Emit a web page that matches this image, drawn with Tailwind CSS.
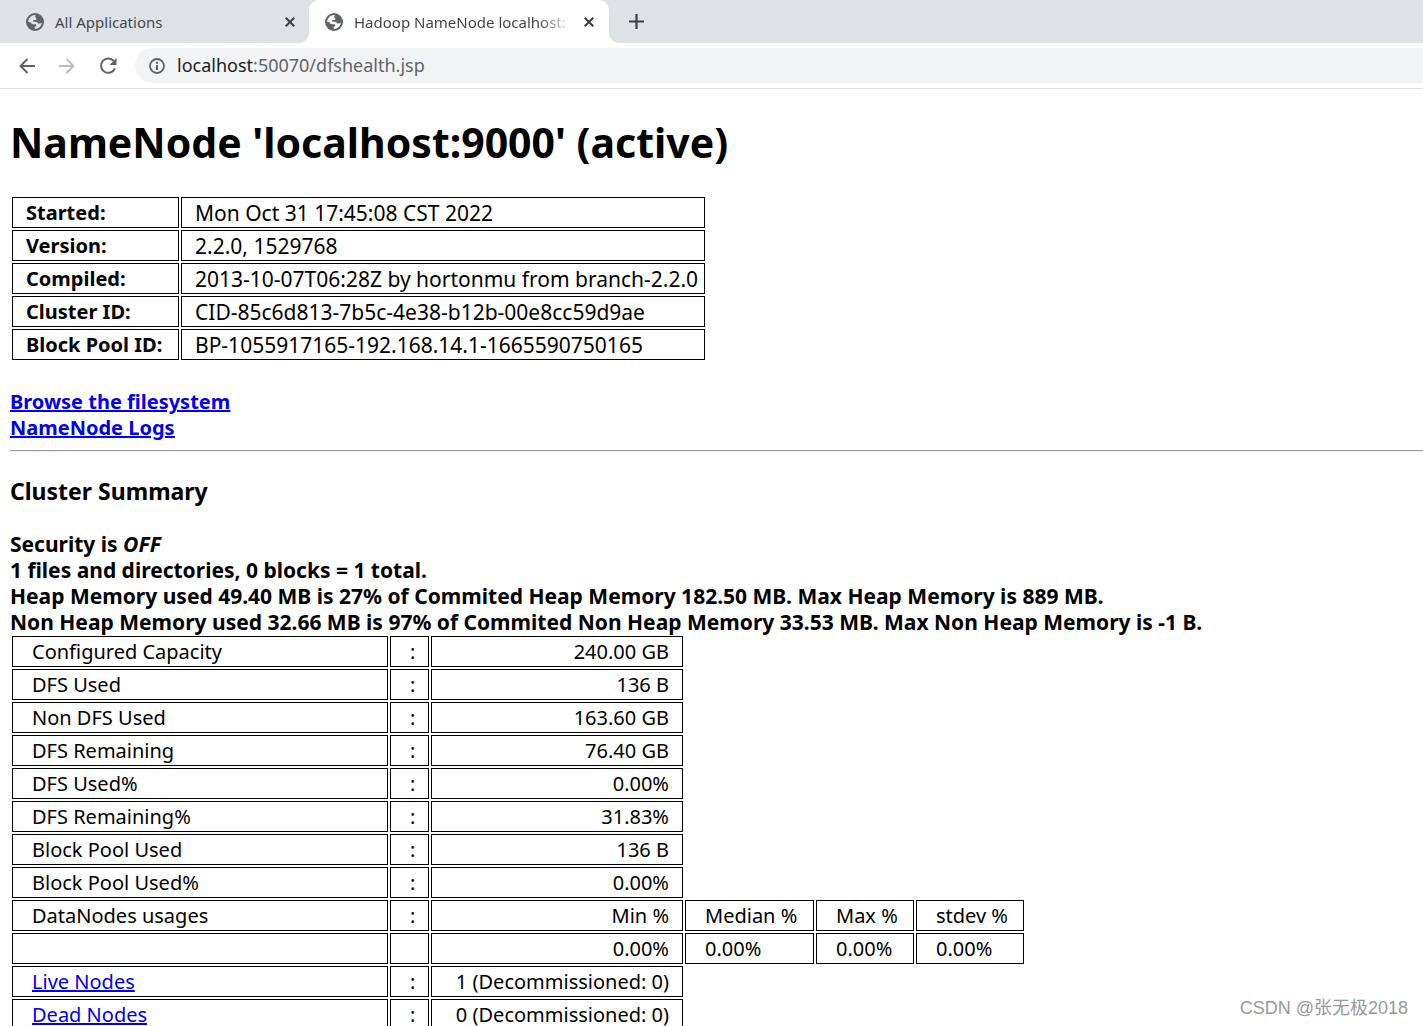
<!DOCTYPE html>
<html lang="en">
<head>
<meta charset="utf-8">
<title>Hadoop NameNode localhost:9000</title>
<script src="https://cdn.jsdelivr.net/npm/@tailwindcss/browser@4"></script>
</head>
<body class="relative flex h-screen flex-col overflow-hidden bg-white font-['Noto_Sans','Noto_Sans_CJK_SC',sans-serif] text-black">
<svg class="hidden">
  <symbol id="globe" viewBox="0 0 18 18">
    <circle cx="9" cy="9" r="9" fill="#5f6368"/>
    <path d="M10 2.2C9 3 8.900 4 9.800 4.700C10.800 5.500 10.600 6.700 9.300 7H7.300V8.800H10.200C11.500 8.800 11.700 10 12.300 10.500H14.200L15.900 9.400A7 7 0 0 1 9 16L8.500 14.200L10.500 12.600L9.700 11.300H6.700C5.500 11.300 5.300 9.700 4.300 9.300L2 9A7 7 0 0 1 10 2.200Z" fill="#dee1e6"/>
  </symbol>
  <symbol id="globe-active" viewBox="0 0 18 18">
    <circle cx="9" cy="9" r="9" fill="#5f6368"/>
    <path d="M10 2.2C9 3 8.900 4 9.800 4.700C10.800 5.500 10.600 6.700 9.300 7H7.300V8.800H10.200C11.500 8.800 11.700 10 12.300 10.500H14.200L15.900 9.400A7 7 0 0 1 9 16L8.500 14.200L10.500 12.600L9.700 11.300H6.700C5.500 11.300 5.300 9.700 4.300 9.300L2 9A7 7 0 0 1 10 2.200Z" fill="#fff"/>
  </symbol>
  <symbol id="close" viewBox="0 0 10 10"><path d="M.7.7l8.600 8.600M9.300.7L.7 9.300" stroke="#3c4043" stroke-width="2" fill="none"/></symbol>
</svg>

<header class="shrink-0">
  <div class="flex h-[43px] bg-[#dee1e6] text-[15px] text-[#45494d]">
    <div class="flex w-[309px] items-center pl-[26px] pr-3">
      <svg class="size-[18px] shrink-0"><use href="#globe"/></svg>
      <span class="ml-[11px] flex-1 whitespace-nowrap pt-0.5">All Applications</span>
      <button type="button" aria-label="Close tab" class="flex size-[14px] items-center justify-center"><svg class="size-[10px]"><use href="#close"/></svg></button>
    </div>
    <div class="relative flex w-[300px] items-center rounded-t-[10px] bg-white pl-4 pr-[13px]">
      <svg class="absolute bottom-0 right-full size-[10px]" viewBox="0 0 10 10"><path d="M10 0A10 10 0 0 1 0 10H10Z" fill="#fff"/></svg>
      <svg class="absolute bottom-0 left-full size-[10px]" viewBox="0 0 10 10"><path d="M0 0A10 10 0 0 0 10 10H0Z" fill="#fff"/></svg>
      <svg class="size-[18px] shrink-0"><use href="#globe-active"/></svg>
      <span class="ml-[11px] w-[218px] whitespace-nowrap bg-linear-to-r from-[#3c4043] from-85% to-transparent bg-clip-text pt-0.5 text-transparent">Hadoop NameNode localhost:</span>
      <button type="button" aria-label="Close tab" class="ml-auto flex size-[14px] shrink-0 items-center justify-center"><svg class="size-[10px]"><use href="#close"/></svg></button>
    </div>
    <button type="button" aria-label="New tab" class="ml-5 flex w-[15px] items-center justify-center"><svg class="size-[15px]" viewBox="0 0 15 15"><path d="M7.500 0v15M0 7.500h15" stroke="#3c4043" stroke-width="2.200"/></svg></button>
  </div>
  <div class="flex h-[46px] items-center border-b border-[#dadce0] pl-[19px]">
    <button type="button" aria-label="Back"><svg class="size-4" viewBox="0 0 16 16" fill="none" stroke="#5f6368" stroke-width="2"><path d="M16 8H1.500M8.500 1L1.500 8l7 7"/></svg></button>
    <button type="button" aria-label="Forward" class="ml-6"><svg class="size-4" viewBox="0 0 16 16" fill="none" stroke="#bbbdc0" stroke-width="2"><path d="M0 8h14.500M7.500 1l7 7l-7 7"/></svg></button>
    <button type="button" aria-label="Reload" class="ml-6"><svg class="size-[18px]" viewBox="0 0 18 18"><path d="M14.900 4.200A7.200 7.200 0 1 0 15.900 11.300" fill="none" stroke="#5f6368" stroke-width="2"/><path d="M17.500 1V8H10.500Z" fill="#5f6368"/></svg></button>
    <div class="ml-[18px] flex h-[35px] flex-1 items-center rounded-l-full bg-[#f1f3f4] pl-[14px] text-lg text-[#5f6368]">
      <svg class="size-4" viewBox="0 0 16 16"><circle cx="8" cy="8" r="7" fill="none" stroke="#5f6368" stroke-width="1.800"/><path d="M8 3.700v2M8 7v5" stroke="#5f6368" stroke-width="2"/></svg>
      <span class="ml-3 pb-0.5"><span class="text-[#202124]">localhost</span>:50070/dfshealth.jsp</span>
    </div>
  </div>
</header>

<main class="min-h-0 flex-1 overflow-hidden pl-[10px] text-xl leading-[26px]">
  <h1 class="mt-[26px] text-[41px] font-bold leading-[54px]">NameNode 'localhost:9000' (active)</h1>

  <table class="mt-[26px] w-[697px] table-fixed border-separate border-spacing-[2px] [&_td]:border [&_td]:px-[13px] [&_td]:text-[21px] [&_th]:border [&_th]:px-[13px] [&_th]:text-left [&_tr]:h-[31px]">
    <colgroup><col class="w-[167px]"><col class="w-[524px]"></colgroup>
    <tbody class="whitespace-nowrap">
      <tr><th scope="row">Started:</th><td>Mon Oct 31 17:45:08 CST 2022</td></tr>
      <tr><th scope="row">Version:</th><td>2.2.0, 1529768</td></tr>
      <tr><th scope="row">Compiled:</th><td>2013-10-07T06:28Z by hortonmu from branch-2.2.0</td></tr>
      <tr><th scope="row">Cluster ID:</th><td>CID-85c6d813-7b5c-4e38-b12b-00e8cc59d9ae</td></tr>
      <tr><th scope="row">Block Pool ID:</th><td>BP-1055917165-192.168.14.1-1665590750165</td></tr>
    </tbody>
  </table>

  <nav class="mt-[27px] flex flex-col items-start font-bold text-[#0000ee] underline">
    <a href="#">Browse the filesystem</a>
    <a href="#">NameNode Logs</a>
  </nav>
  <hr class="mt-[9px] border-t border-b border-t-[#9a9a9a] border-b-[#eeeeee]">

  <h3 class="mt-[23px] text-[23px] font-bold leading-8">Cluster Summary</h3>
  <div class="mt-6 whitespace-nowrap text-[21px] font-bold">
    <p>Security is <em>OFF</em></p>
    <p>1 files and directories, 0 blocks = 1 total.</p>
    <p>Heap Memory used 49.40 MB is 27% of Commited Heap Memory 182.50 MB. Max Heap Memory is 889 MB.</p>
    <p>Non Heap Memory used 32.66 MB is 97% of Commited Non Heap Memory 33.53 MB. Max Non Heap Memory is -1 B.</p>
  </div>

  <table class="-mt-px w-[1016px] table-fixed border-separate border-spacing-[2px] whitespace-nowrap [&_td]:border [&_td]:pl-[19px] [&_td]:pr-[13px] [&_td:nth-child(3)]:text-right [&_tr]:h-[31px]">
    <colgroup><col class="w-[376px]"><col class="w-[39px]"><col class="w-[252px]"><col class="w-[129px]"><col class="w-[98px]"><col class="w-[108px]"></colgroup>
    <tbody>
      <tr><td>Configured Capacity</td><td>:</td><td>240.00 GB</td></tr>
      <tr><td>DFS Used</td><td>:</td><td>136 B</td></tr>
      <tr><td>Non DFS Used</td><td>:</td><td>163.60 GB</td></tr>
      <tr><td>DFS Remaining</td><td>:</td><td>76.40 GB</td></tr>
      <tr><td>DFS Used%</td><td>:</td><td>0.00%</td></tr>
      <tr><td>DFS Remaining%</td><td>:</td><td>31.83%</td></tr>
      <tr><td>Block Pool Used</td><td>:</td><td>136 B</td></tr>
      <tr><td>Block Pool Used%</td><td>:</td><td>0.00%</td></tr>
      <tr><td>DataNodes usages</td><td>:</td><td>Min %</td><td>Median %</td><td>Max %</td><td>stdev %</td></tr>
      <tr><td></td><td></td><td>0.00%</td><td>0.00%</td><td>0.00%</td><td>0.00%</td></tr>
      <tr><td><a href="#" class="text-[#0000ee] underline">Live Nodes</a></td><td>:</td><td>1 (Decommissioned: 0)</td></tr>
      <tr><td><a href="#" class="text-[#0000ee] underline">Dead Nodes</a></td><td>:</td><td>0 (Decommissioned: 0)</td></tr>
    </tbody>
  </table>
</main>

<div class="absolute bottom-1 right-[15px] font-['Liberation_Sans','Noto_Sans_CJK_SC',sans-serif] text-lg text-[#999999]">CSDN @张无极2018</div>
</body>
</html>
